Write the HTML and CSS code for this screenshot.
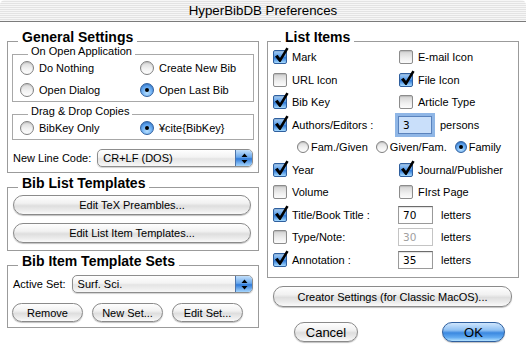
FILE: index.html
```html
<!DOCTYPE html>
<html lang="en">

<head>
    <meta charset="UTF-8">
    <title>HyperBibDB Preferences</title>
    <link rel="stylesheet" href="styles.css">
</head>

<body>
    <div class="window">
        <div class="titlebar">HyperBibDB Preferences</div>

        <div class="panes">
            <div class="pane">
                <div class="group">
                    <div class="group-title">General Settings</div>

                    <div class="subgroup">
                        <div class="sub-title">On Open Application</div>
                        <div class="choice-grid">
                            <label class="radio"><span class="rb"></span>Do Nothing</label>
                            <label class="radio"><span class="rb"></span>Create New Bib</label>
                            <label class="radio"><span class="rb"></span>Open Dialog</label>
                            <label class="radio"><span class="rb on"></span>Open Last Bib</label>
                        </div>
                    </div>

                    <div class="subgroup second">
                        <div class="sub-title">Drag &amp; Drop Copies</div>
                        <div class="choice-grid">
                            <label class="radio"><span class="rb"></span>BibKey Only</label>
                            <label class="radio"><span class="rb on"></span>¥cite{BibKey}</label>
                        </div>
                    </div>

                    <div class="popup-row">
                        <span>New Line Code:</span>
                        <div class="popup">CR+LF (DOS)
                            <span class="popup-arrows">
                                <svg width="7" height="11" viewBox="0 0 7 11"><path d="M3.5 0.5 L6.5 4 L0.5 4 Z M0.5 7 L6.5 7 L3.5 10.5 Z" fill="#000"/></svg>
                            </span>
                        </div>
                    </div>
                </div>

                <div class="group templates">
                    <div class="group-title">Bib List Templates</div>
                    <button class="btn wide">Edit TeX Preambles...</button>
                    <button class="btn wide">Edit List Item Templates...</button>
                </div>

                <div class="group sets">
                    <div class="group-title">Bib Item Template Sets</div>
                    <div class="popup-row">
                        <span>Active Set:</span>
                        <div class="popup">Surf. Sci.
                            <span class="popup-arrows">
                                <svg width="7" height="11" viewBox="0 0 7 11"><path d="M3.5 0.5 L6.5 4 L0.5 4 Z M0.5 7 L6.5 7 L3.5 10.5 Z" fill="#000"/></svg>
                            </span>
                        </div>
                    </div>
                    <div class="set-buttons">
                        <button class="btn small">Remove</button>
                        <button class="btn small">New Set...</button>
                        <button class="btn small">Edit Set...</button>
                    </div>
                </div>
            </div>

            <div class="pane">
                <div class="group list-items">
                    <div class="group-title">List Items</div>
                    <div class="item-grid">
                        <label class="check"><span class="cb on"><svg class="tick" width="15" height="16" viewBox="0 0 15 16"><path d="M1 9.5 L3.6 7.8 L6 11 L12.4 0.6 L14.6 1.8 L6.6 15 L5.4 15 Z" fill="#000"/></svg></span>Mark</label>
                        <label class="check"><span class="cb"></span>E-mail Icon</label>

                        <label class="check"><span class="cb"></span>URL Icon</label>
                        <label class="check"><span class="cb on"><svg class="tick" width="15" height="16" viewBox="0 0 15 16"><path d="M1 9.5 L3.6 7.8 L6 11 L12.4 0.6 L14.6 1.8 L6.6 15 L5.4 15 Z" fill="#000"/></svg></span>File Icon</label>

                        <label class="check"><span class="cb on"><svg class="tick" width="15" height="16" viewBox="0 0 15 16"><path d="M1 9.5 L3.6 7.8 L6 11 L12.4 0.6 L14.6 1.8 L6.6 15 L5.4 15 Z" fill="#000"/></svg></span>Bib Key</label>
                        <label class="check"><span class="cb"></span>Article Type</label>

                        <label class="check"><span class="cb on"><svg class="tick" width="15" height="16" viewBox="0 0 15 16"><path d="M1 9.5 L3.6 7.8 L6 11 L12.4 0.6 L14.6 1.8 L6.6 15 L5.4 15 Z" fill="#000"/></svg></span>Authors/Editors :</label>
                        <div class="field-row"><span class="field focus">3</span>persons</div>

                        <div class="name-order">
                            <label class="radio mini"><span class="rb"></span>Fam./Given</label>
                            <label class="radio mini"><span class="rb"></span>Given/Fam.</label>
                            <label class="radio mini"><span class="rb on"></span>Family</label>
                        </div>

                        <label class="check"><span class="cb on"><svg class="tick" width="15" height="16" viewBox="0 0 15 16"><path d="M1 9.5 L3.6 7.8 L6 11 L12.4 0.6 L14.6 1.8 L6.6 15 L5.4 15 Z" fill="#000"/></svg></span>Year</label>
                        <label class="check"><span class="cb on"><svg class="tick" width="15" height="16" viewBox="0 0 15 16"><path d="M1 9.5 L3.6 7.8 L6 11 L12.4 0.6 L14.6 1.8 L6.6 15 L5.4 15 Z" fill="#000"/></svg></span>Journal/Publisher</label>

                        <label class="check"><span class="cb"></span>Volume</label>
                        <label class="check"><span class="cb"></span>FIrst Page</label>

                        <label class="check"><span class="cb on"><svg class="tick" width="15" height="16" viewBox="0 0 15 16"><path d="M1 9.5 L3.6 7.8 L6 11 L12.4 0.6 L14.6 1.8 L6.6 15 L5.4 15 Z" fill="#000"/></svg></span>Title/Book Title :</label>
                        <div class="field-row"><span class="field">70</span>letters</div>

                        <label class="check"><span class="cb"></span>Type/Note:</label>
                        <div class="field-row"><span class="field disabled">30</span>letters</div>

                        <label class="check"><span class="cb on"><svg class="tick" width="15" height="16" viewBox="0 0 15 16"><path d="M1 9.5 L3.6 7.8 L6 11 L12.4 0.6 L14.6 1.8 L6.6 15 L5.4 15 Z" fill="#000"/></svg></span>Annotation :</label>
                        <div class="field-row"><span class="field">35</span>letters</div>
                    </div>
                </div>

                <button class="btn creator">Creator Settings (for Classic MacOS)...</button>

                <div class="dialog-buttons">
                    <button class="btn push">Cancel</button>
                    <button class="btn push default">OK</button>
                </div>
            </div>
        </div>
    </div>
</body>

</html>
```

FILE: styles.css
```css
* {
    box-sizing: border-box;
}

body {
    margin: 0;
    background: #fff;
    font-family: "Liberation Sans", Arial, sans-serif;
    font-size: 11px;
    color: #000;
}

.window {
    width: 526px;
    height: 355px;
    background: #fff;
    overflow: hidden;
}

.titlebar {
    height: 22px;
    line-height: 21px;
    text-align: center;
    font-size: 13.3px;
    border-bottom: 1px solid #7b7b7b;
    border-radius: 5px 5px 0 0;
    background: repeating-linear-gradient(#f6f6f6 0 1px, #e3e3e3 1px 2px);
}

.panes {
    display: grid;
    grid-template-columns: 252px 252px;
    column-gap: 8px;
    padding: 19px 7px 0;
    align-items: start;
}

/* group boxes */

.group {
    border: 1px solid #9b9b9b;
    padding: 0 4px 5px;
}

.group-title {
    font-weight: bold;
    font-size: 14px;
    line-height: 12px;
    margin: -11px 0 0 6px;
    padding: 0 4px;
    background: #fff;
    width: fit-content;
}

.subgroup {
    border: 1px solid #a8a8a8;
    margin-top: 11px;
    padding: 0 7px;
}

.subgroup.second {
    margin-top: 12px;
}

.sub-title {
    font-size: 11px;
    line-height: 12px;
    margin: -10px 0 0 8px;
    padding: 0 3px;
    background: #fff;
    width: fit-content;
}

.choice-grid {
    display: grid;
    grid-template-columns: 120px 1fr;
    grid-auto-rows: 22px;
}

/* radios */

.radio {
    display: flex;
    align-items: center;
    gap: 5px;
}

.rb {
    width: 14px;
    height: 14px;
    border-radius: 50%;
    border: 1px solid #808080;
    background: linear-gradient(#d8d8d8, #f3f3f3 60%, #fdfdfd);
    box-shadow: inset 0 1px 1px rgba(0, 0, 0, 0.12);
    display: flex;
    align-items: center;
    justify-content: center;
    flex: none;
}

.rb.on {
    border-color: #2f5f9e;
    background: radial-gradient(circle at 50% 75%, #b8e0ff 0, #6fb0f2 45%, #2d78d6 100%);
}

.rb.on::after {
    content: "";
    width: 4px;
    height: 4px;
    border-radius: 50%;
    background: #000;
}

.radio.mini {
    gap: 2px;
}

.radio.mini .rb {
    width: 12px;
    height: 12px;
}

/* popups */

.popup-row {
    display: flex;
    align-items: center;
    gap: 6px;
    padding-left: 1px;
    margin-top: 9px;
}

.popup {
    flex: 1;
    height: 18px;
    margin-right: 1px;
    border: 1px solid #8d8d8d;
    border-radius: 5px;
    background: linear-gradient(#ffffff, #f3f3f3 45%, #e4e4e4 55%, #f7f7f7);
    box-shadow: 0 1px 1px rgba(0, 0, 0, 0.18);
    display: flex;
    align-items: center;
    padding-left: 5px;
    overflow: hidden;
}

.popup-arrows {
    margin-left: auto;
    width: 17px;
    height: 100%;
    border-left: 1px solid #4c74aa;
    background: linear-gradient(#c3e0fb, #6aa8ec 45%, #2f7ad9 55%, #a6d6fd);
    display: flex;
    align-items: center;
    justify-content: center;
}

/* buttons */

.btn {
    display: block;
    height: 20px;
    padding: 0;
    border: 1px solid #8a8a8a;
    border-radius: 10px;
    background: linear-gradient(#fefefe, #f1f1f1 40%, #dedede 55%, #ececec 80%, #fafafa);
    box-shadow: 0 1px 1px rgba(0, 0, 0, 0.25);
    font-family: "Liberation Sans", Arial, sans-serif;
    font-size: 11px;
    color: #000;
}

.btn.wide {
    width: 238px;
    margin: 6px 0 0 1px;
}

.btn.wide + .btn.wide {
    margin-top: 8px;
}

.templates {
    margin-top: 14px;
    padding-bottom: 7px;
}

.sets {
    margin-top: 14px;
}

.sets .popup-row {
    margin-top: 8px;
}

.set-buttons {
    display: flex;
    gap: 9px;
    margin-top: 10px;
}

.btn.small {
    width: 71px;
    height: 19px;
}

.btn.creator {
    width: 239px;
    height: 21px;
    margin: 8px 0 0 6px;
}

.dialog-buttons {
    display: flex;
    justify-content: space-between;
    margin-top: 15px;
    padding: 0 14px 0 27px;
}

.btn.push {
    width: 64px;
    font-size: 13px;
}

.btn.default {
    width: 63px;
    border-color: #2f5f9e;
    background: linear-gradient(#cfe6fd, #8ec0f3 40%, #3b88e0 55%, #62abf1 80%, #b4e2ff);
}

/* list items */

.list-items .group-title {
    margin-left: 9px;
}

.list-items {
    padding-bottom: 6px;
}

.item-grid {
    display: grid;
    grid-template-columns: 126px 1fr;
    grid-auto-rows: 22.5px;
    margin-top: 3px;
}

.check {
    display: flex;
    align-items: center;
    gap: 5px;
    padding-left: 1px;
}

.cb {
    position: relative;
    width: 14px;
    height: 14px;
    border: 1px solid #8c8c8c;
    border-radius: 2px;
    background: linear-gradient(#d2d2d2, #efefef 60%, #fbfbfb);
    box-shadow: inset 0 1px 1px rgba(0, 0, 0, 0.12);
    flex: none;
}

.cb.on {
    border-color: #2f5f9e;
    background: linear-gradient(#a9d0f7, #4f95e4 50%, #2f7ad9 55%, #a6dafe);
}

.tick {
    position: absolute;
    left: 0;
    top: -4px;
}

.name-order {
    grid-column: 1 / -1;
    display: flex;
    align-items: center;
    gap: 8px;
    padding-left: 25px;
}

.field-row {
    display: flex;
    align-items: center;
    gap: 8px;
}

.field {
    width: 35px;
    height: 18px;
    border: 1px solid #9a9a9a;
    border-top-color: #6c6c6c;
    background: #fff;
    box-shadow: inset 0 1px 1px rgba(0, 0, 0, 0.12);
    font-family: "DejaVu Sans", sans-serif;
    font-size: 10.5px;
    line-height: 16px;
    padding-left: 4px;
}

.field.focus {
    width: 34px;
    background: #c9dffa;
    box-shadow: 0 0 0 3px #8fb6e6;
    border-color: #5a83bd;
}

.field.disabled {
    color: #a0a0a0;
    border-color: #c4c4c4;
    box-shadow: none;
}
```
